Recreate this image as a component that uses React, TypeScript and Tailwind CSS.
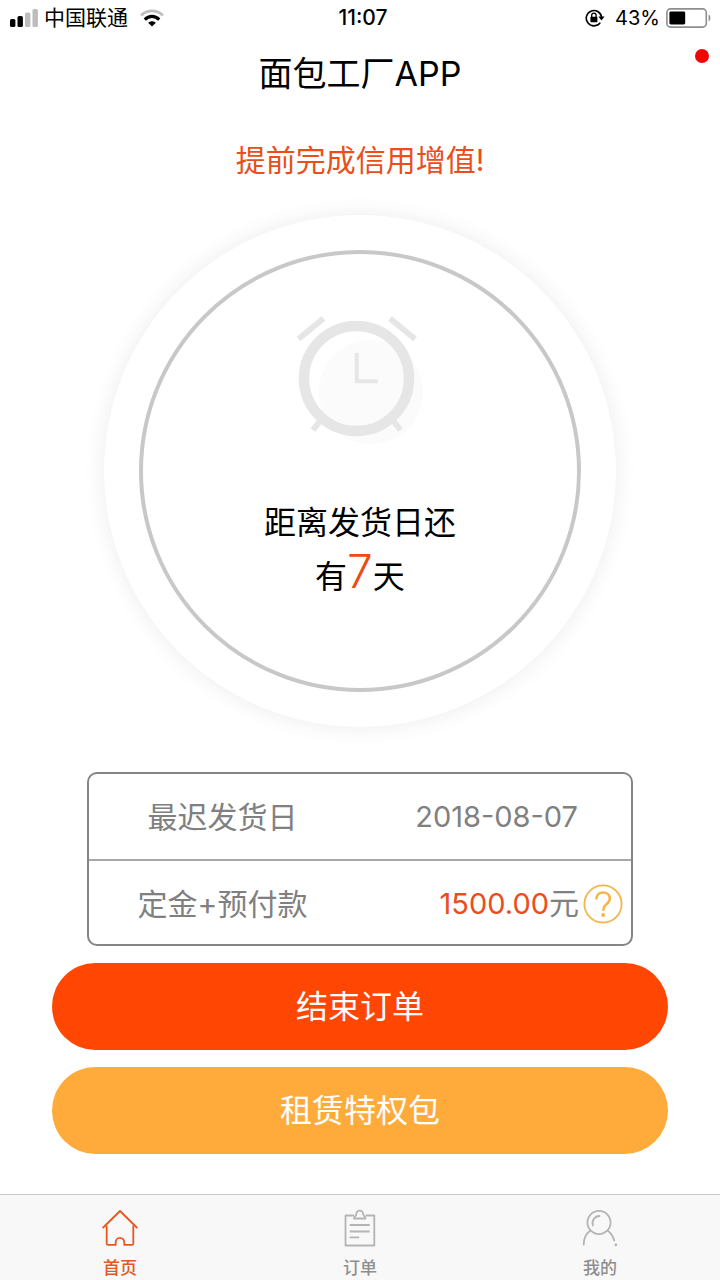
import type { ReactNode } from 'react';

interface Tab {
  label: string;
  href: string;
  active?: boolean;
  icon: ReactNode;
}

const tabs: Tab[] = [
  { label: '首页', href: '#home', active: true, icon: <HomeIcon /> },
  { label: '订单', href: '#orders', icon: <OrderIcon /> },
  { label: '我的', href: '#mine', icon: <UserIcon /> },
];

function SignalIcon() {
  return (
    <svg width="28" height="18" viewBox="0 0 28 18" aria-hidden="true">
      <rect x="0" y="10" width="5.4" height="8" rx="1.6" fill="#000" />
      <rect x="7.5" y="7" width="5.4" height="11" rx="1.6" fill="#000" />
      <rect x="15" y="3.5" width="5.4" height="14.5" rx="1.6" fill="#bdbdbd" />
      <rect x="22.5" y="0" width="5.4" height="18" rx="1.6" fill="#bdbdbd" />
    </svg>
  );
}

function WifiIcon() {
  return (
    <svg width="24" height="18" viewBox="0 0 24 18" fill="none" aria-hidden="true">
      <path d="M1.2 6.4C7.2 0.4 16.8 0.4 22.8 6.4" stroke="#bdbdbd" strokeWidth="2.8" />
      <path d="M4.8 10.6c4.2-4.2 10.2-4.2 14.4 0" stroke="#000" strokeWidth="3.2" />
      <path d="M8.2 13.8c2.2-2 5.4-2 7.6 0L12 17.6z" fill="#000" />
    </svg>
  );
}

function RotationLockIcon() {
  return (
    <svg width="20" height="18" viewBox="0 0 20 18" fill="none" stroke="#000" strokeWidth="1.6" aria-hidden="true">
      <path d="M15.3 13.6A7.7 7.7 0 1 1 16.6 8.2" />
      <path d="M13.4 7.6h6.2l-3.1 3.8z" fill="#000" stroke="none" />
      <rect x="5.4" y="7.8" width="7" height="5.4" rx="0.6" fill="#000" stroke="none" />
      <path d="M6.7 8.2V6.3a2.2 2.2 0 0 1 4.4 0v1.9" strokeWidth="1.3" />
    </svg>
  );
}

function BatteryIcon() {
  return (
    <svg width="46" height="20" viewBox="0 0 46 20" fill="none" aria-hidden="true">
      <rect x="0.9" y="0.9" width="39.4" height="18.2" rx="3.6" stroke="#8e8e8e" strokeWidth="1.6" />
      <rect x="3.4" y="3.6" width="15.8" height="12.8" rx="1.4" fill="#000" />
      <path d="M42.6 6.6c2.4 1.2 2.4 5.6 0 6.8z" fill="#8e8e8e" />
    </svg>
  );
}

function ClockIcon() {
  return (
    <svg width="130" height="132" viewBox="-1 0 130 132" fill="none" stroke="#e6e6e6" aria-hidden="true">
      <circle cx="75" cy="79" r="52" fill="#fbfbfb" stroke="none" />
      <circle cx="60.5" cy="65.5" r="52.5" strokeWidth="10.5" />
      <path d="M2.5 26 27.5 5.5M119 26 94 5.5" strokeWidth="6" />
      <path d="M24.5 107.5 17 117M97 107.5l7.5 9.5" strokeWidth="6" />
      <path d="M60.7 40v28.2h21" strokeWidth="4" />
    </svg>
  );
}

function HelpIcon() {
  return (
    <svg width="40" height="40" viewBox="0 0 40 40" fill="none" stroke="#f5b54c" aria-hidden="true">
      <circle cx="20" cy="20" r="18.6" strokeWidth="1.8" />
      <path d="M13.4 15.4c0-4.4 2.7-7 6.8-7 4 0 6.6 2.5 6.6 6 0 5.9-6.5 5.7-6.5 11v1.4" strokeWidth="2.5" />
      <circle cx="20.2" cy="31" r="2" fill="#f5b54c" stroke="none" />
    </svg>
  );
}

function HomeIcon() {
  return (
    <svg width="40" height="40" viewBox="0 0 40 40" fill="none" stroke="#e6571c" strokeWidth="1.8" strokeLinecap="round" strokeLinejoin="round" aria-hidden="true">
      <path d="M3.2 19.5 20 3l16.8 16.5" />
      <path d="M6.7 18.2v17.3a1.4 1.4 0 0 0 1.4 1.4h7.6v-2.7a4.3 4.3 0 0 1 8.6 0v2.7h7.6a1.4 1.4 0 0 0 1.4-1.4V18.2" />
    </svg>
  );
}

function OrderIcon() {
  return (
    <svg width="40" height="40" viewBox="0 0 40 40" fill="none" stroke="#b4b4b4" strokeWidth="1.8" strokeLinejoin="round" aria-hidden="true">
      <path d="M14 7.5H5.5v30h28.8v-30H25.5" />
      <path d="M14 10.5c0-2.2 2.3-2 2.3-4.4a3.4 3.4 0 0 1 6.8 0c0 2.4 2.4 2.2 2.4 4.4z" />
      <path d="M9.7 17h20M9.7 23.5h20M9.7 29.3h9.5" />
    </svg>
  );
}

function UserIcon() {
  return (
    <svg width="40" height="40" viewBox="0 0 40 40" fill="none" stroke="#b4b4b4" strokeWidth="1.8" strokeLinecap="round" aria-hidden="true">
      <circle cx="19" cy="14.5" r="11.6" />
      <path d="M19.5 8a7 7 0 0 0-6.5 9.5" />
      <path d="M10.5 22.5C6.2 25.5 3.7 30.5 3.7 36.5M27.5 22.5c3.3 2.3 5.6 6 6.7 10" />
      <circle cx="35.8" cy="36.8" r="1.4" fill="#b4b4b4" stroke="none" />
    </svg>
  );
}

function StatusBar() {
  return (
    <div className="grid h-9 grid-cols-[1fr_auto_1fr] items-center pr-2 pl-2.5 text-xl text-black">
      <div className="flex items-center gap-1.5">
        <SignalIcon />
        <span className="text-[21px]">中国联通</span>
        <span className="ml-1.5">
          <WifiIcon />
        </span>
      </div>
      <span className="pl-1 text-[21px] font-medium">11:07</span>
      <div className="flex items-center justify-end gap-1.5">
        <span className="mr-1">
          <RotationLockIcon />
        </span>
        <span>43%</span>
        <BatteryIcon />
      </div>
    </div>
  );
}

function Countdown({ days }: { days: number }) {
  return (
    <section className="rounded-full bg-white p-[35px] shadow-[0_0_22px_rgba(0,0,0,0.08)]">
      <div className="flex size-[442px] flex-col items-center rounded-full border-4 border-[#c8c8c8] pt-[59px]">
        <ClockIcon />
        <p className="mt-[53px] text-center text-[32px] leading-[50px] text-black">
          距离发货日还
          <br />
          有<span className="text-[46px] leading-none font-light text-[#f04a10]">{days}</span>天
        </p>
      </div>
    </section>
  );
}

export default function App() {
  return (
    <div className="flex min-h-screen flex-col bg-white font-['Inter','Noto_Sans_CJK_SC',sans-serif]">
      <StatusBar />
      <header className="relative flex h-[74px] items-center justify-center">
        <h1 className="text-[34px] text-black">面包工厂APP</h1>
        <span className="absolute top-[13px] right-[11px] size-3.5 rounded-full bg-[#f00505]" />
      </header>

      <main className="flex flex-1 flex-col items-center">
        <p className="mt-[26px] text-[30px] leading-[48px] text-[#e94e1b]">提前完成信用增值!</p>
        <div className="mt-[31px]">
          <Countdown days={7} />
        </div>

        <dl className="mt-[45px] w-[546px] max-w-full rounded-[10px] border-2 border-[#858585] text-[30px] leading-[48px] text-[#808080]">
          <div className="grid h-[85px] grid-cols-2 items-center">
            <dt className="pr-1 text-center">最迟发货日</dt>
            <dd className="pr-[53px] text-right text-[29px]">2018-08-07</dd>
          </div>
          <div className="grid h-[85px] grid-cols-2 items-center border-t-2 border-[#a8a8a8] pt-0.5">
            <dt className="pr-1 text-center">定金+预付款</dt>
            <dd className="flex items-center justify-end gap-1 pr-2">
              <span>
                <span className="text-[29px] text-[#e94e1b]">1500.00</span>元
              </span>
              <button type="button" aria-label="说明">
                <HelpIcon />
              </button>
            </dd>
          </div>
        </dl>

        <div className="mt-[17px] flex w-full flex-col gap-[17px] px-[52px] text-[32px] text-white">
          <button type="button" className="h-[87px] rounded-full bg-[#ff4602]">
            结束订单
          </button>
          <button type="button" className="h-[87px] rounded-full bg-[#ffab3b]">
            租赁特权包
          </button>
        </div>
      </main>

      <nav className="grid h-[86px] grid-cols-3 border-t border-[#c8c8c8] bg-[#f8f8f8] pt-[13px]">
        {tabs.map((tab) => (
          <a
            key={tab.label}
            href={tab.href}
            className={
              tab.active
                ? 'flex flex-col items-center gap-2 text-[17px] leading-6 font-medium text-[#e6571c]'
                : 'flex flex-col items-center gap-2 text-[17px] leading-6 font-medium text-[#8e8e8e]'
            }
          >
            {tab.icon}
            {tab.label}
          </a>
        ))}
      </nav>
    </div>
  );
}
